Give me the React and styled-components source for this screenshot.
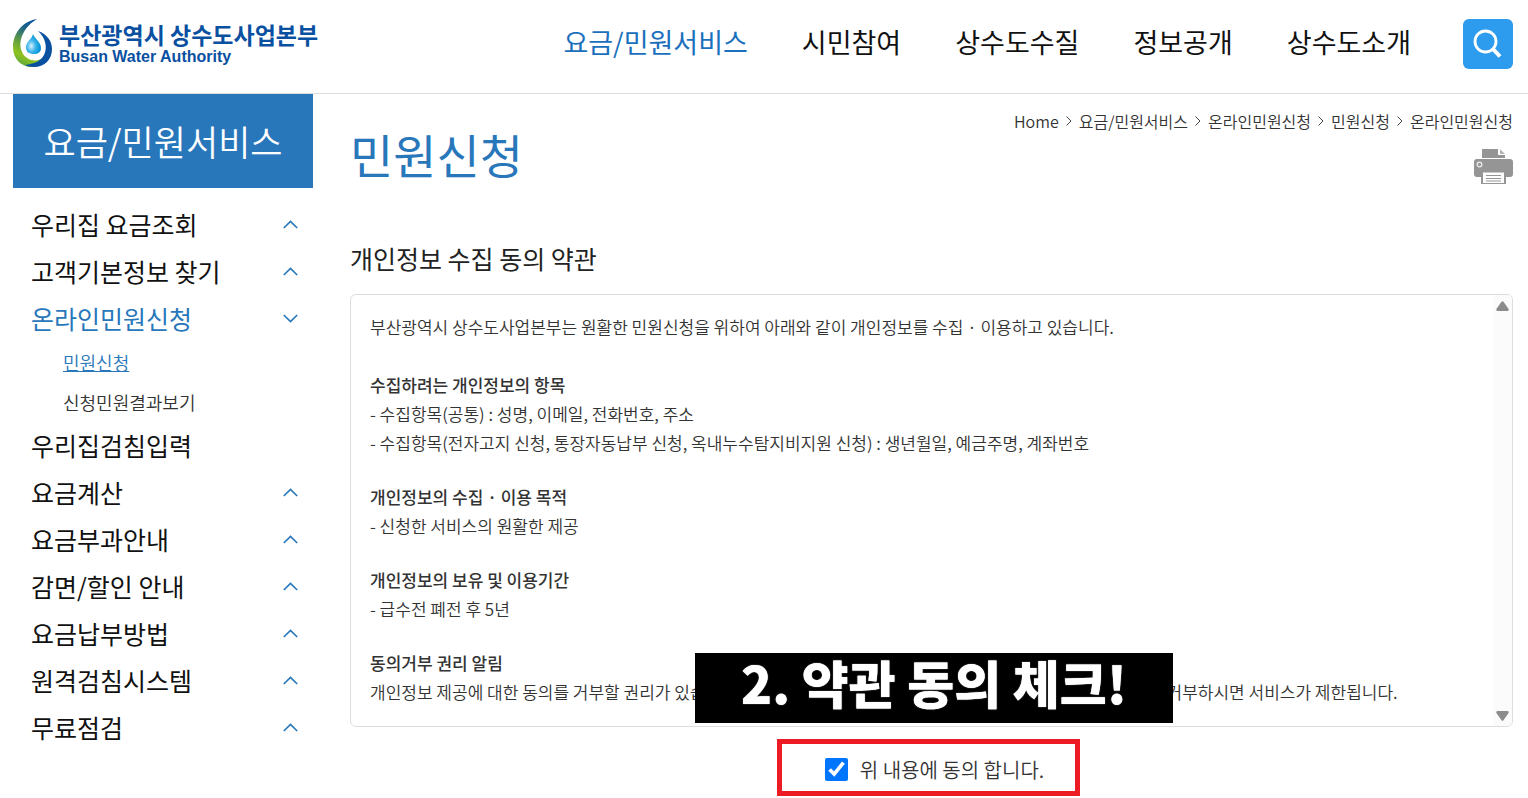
import React from 'react';
import styled, { createGlobalStyle } from 'styled-components';

const GlobalStyle = createGlobalStyle`
  * {
    box-sizing: border-box;
  }
  body {
    margin: 0;
    background: #fff;
    color: #333;
    font-family: 'Noto Sans CJK KR', 'Noto Sans', sans-serif;
    font-size: 17px;
    font-weight: 350;
  }
  a {
    color: inherit;
    text-decoration: none;
  }
  h1, h2, h3, p, ul, ol {
    margin: 0;
    padding: 0;
  }
  ul, ol {
    list-style: none;
  }
  button {
    border: 0;
    padding: 0;
    background: none;
    font: inherit;
    color: inherit;
    cursor: pointer;
  }
`;

const Header = styled.header`
  display: flex;
  align-items: center;
  height: 94px;
  padding: 0 15px 6px 13px;
  border-bottom: 1px solid #ddd;
`;

const LogoLink = styled.a`
  display: flex;
  align-items: center;
  gap: 6px;
  color: #0a50a1;
`;

const LogoText = styled.span`
  display: flex;
  flex-direction: column;
  gap: 2px;
  padding-top: 2px;
  white-space: nowrap;
`;

const LogoName = styled.span`
  font-size: 23px;
  font-weight: 700;
  line-height: 22px;
`;

const LogoSub = styled.span`
  font-family: 'Liberation Sans', Arial, sans-serif;
  font-size: 16px;
  font-weight: 700;
  line-height: 20px;
`;

const Nav = styled.nav`
  display: flex;
  gap: 54px;
  margin-left: auto;
  margin-right: 52px;
`;

const NavLink = styled.a`
  padding-bottom: 4px;
  font-size: 27px;
  font-weight: 400;
  line-height: 40px;
  white-space: nowrap;
  color: ${props => (props.$active ? '#1b70bd' : '#111')};
`;

const SearchButton = styled.button`
  display: flex;
  align-items: center;
  justify-content: center;
  width: 50px;
  height: 50px;
  border-radius: 6px;
  background: #2e9cee;
`;

const Page = styled.div`
  display: flex;
  align-items: flex-start;
  gap: 37px;
  padding: 0 15px 0 13px;
`;

const Sidebar = styled.aside`
  flex: 0 0 300px;
`;

const SidebarTitle = styled.h2`
  height: 94px;
  background: #2977bb;
  color: #fff;
  font-size: 35px;
  font-weight: 350;
  line-height: 94px;
  text-align: center;
`;

const Menu = styled.ul`
  padding: 13px 15px 0 18px;
`;

const MenuLink = styled.a`
  display: flex;
  align-items: center;
  justify-content: space-between;
  font-size: 25px;
  font-weight: 400;
  line-height: 47px;
  color: ${props => (props.$active ? '#2977bb' : '#111')};
`;

const SubMenu = styled.ul`
  padding-left: 32px;
`;

const SubLink = styled.a`
  font-size: 18px;
  line-height: 40px;
  color: ${props => (props.$active ? '#2977bb' : '#333')};
  text-decoration: ${props => (props.$active ? 'underline' : 'none')};
`;

const Main = styled.main`
  flex: 1;
  min-width: 0;
`;

const TopRow = styled.div`
  display: flex;
  justify-content: space-between;
  align-items: flex-start;
`;

const PageTitle = styled.h1`
  padding-top: 22px;
  font-size: 47px;
  font-weight: 400;
  line-height: 76px;
  color: #2977bb;
`;

const Tools = styled.div`
  display: flex;
  flex-direction: column;
  align-items: flex-end;
  gap: 16px;
  padding-top: 15px;
`;

const Crumbs = styled.ol`
  display: flex;
  gap: 7px;
  font-size: 16px;
  line-height: 24px;
`;

const Crumb = styled.li`
  display: flex;
  align-items: center;
  gap: 7px;
`;

const SectionTitle = styled.h2`
  padding-top: 46px;
  font-size: 25px;
  font-weight: 400;
  line-height: 40px;
  color: #222;
`;

const TermsWrap = styled.div`
  position: relative;
  margin-top: 16px;
`;

const Terms = styled.div`
  display: flex;
  border: 1px solid #ddd;
  border-radius: 6px;
  overflow: hidden;
`;

const TermsBody = styled.div`
  flex: 1;
  padding: 17px 19px 20px;
  line-height: 29px;
`;

const Intro = styled.p`
  margin-bottom: 29px;
`;

const TermsGroup = styled.section`
  & + & {
    margin-top: 25px;
  }
`;

const TermsHeading = styled.h3`
  font-size: 17px;
  font-weight: 500;
`;

const ScrollTrack = styled.div`
  display: flex;
  flex-direction: column;
  justify-content: space-between;
  align-items: center;
  width: 19px;
  padding: 6px 0 5px;
  background: #fbfbfb;
`;

const ScrollButton = styled.button`
  display: flex;
`;

const Banner = styled.div`
  position: absolute;
  left: 345px;
  bottom: 4px;
  width: 478px;
  height: 70px;
  background: #000;
  color: #fff;
  font-size: 51px;
  font-weight: 900;
  line-height: 58px;
  text-align: center;
  white-space: nowrap;
  text-shadow: 0 0 1px #fff;
`;

const AgreeRow = styled.div`
  display: flex;
  justify-content: center;
  padding: 12px 6px 0 0;
`;

const AgreeLabel = styled.label`
  display: flex;
  align-items: center;
  justify-content: center;
  gap: 12px;
  width: 303px;
  height: 57px;
  padding: 4px 0 0 12px;
  border: 5px solid #ed1c24;
  font-size: 20px;
`;

const Checkbox = styled.input`
  width: 23px;
  height: 23px;
  margin: 0;
  accent-color: #0075ff;
`;

const navItems = ['요금/민원서비스', '시민참여', '상수도수질', '정보공개', '상수도소개'];

const crumbs = ['Home', '요금/민원서비스', '온라인민원신청', '민원신청', '온라인민원신청'];

const menuItems = [
  { label: '우리집 요금조회', arrow: 'up' },
  { label: '고객기본정보 찾기', arrow: 'up' },
  { label: '온라인민원신청', arrow: 'down', children: ['민원신청', '신청민원결과보기'] },
  { label: '우리집검침입력' },
  { label: '요금계산', arrow: 'up' },
  { label: '요금부과안내', arrow: 'up' },
  { label: '감면/할인 안내', arrow: 'up' },
  { label: '요금납부방법', arrow: 'up' },
  { label: '원격검침시스템', arrow: 'up' },
  { label: '무료점검', arrow: 'up' },
];

const terms = [
  {
    title: '수집하려는 개인정보의 항목',
    lines: [
      '- 수집항목(공통) : 성명, 이메일, 전화번호, 주소',
      '- 수집항목(전자고지 신청, 통장자동납부 신청, 옥내누수탐지비지원 신청) : 생년월일, 예금주명, 계좌번호',
    ],
  },
  { title: '개인정보의 수집 · 이용 목적', lines: ['- 신청한 서비스의 원활한 제공'] },
  { title: '개인정보의 보유 및 이용기간', lines: ['- 급수전 폐전 후 5년'] },
  {
    title: '동의거부 권리 알림',
    lines: [
      '개인정보 제공에 대한 동의를 거부할 권리가 있습니다. 그러나 민원신청에 필요한 개인정보의 수집 및 이용에 동의를 거부하시면 서비스가 제한됩니다.',
    ],
  },
];

const LogoMark = () => (
  <svg width="40" height="50" viewBox="0 0 40 50" aria-hidden="true">
    <defs>
      <linearGradient id="ring" x1="0.7" y1="0" x2="0.4" y2="1">
        <stop offset="0" stopColor="#0a50a1" />
        <stop offset="0.25" stopColor="#1d6388" />
        <stop offset="0.6" stopColor="#6ba53a" />
        <stop offset="0.8" stopColor="#8dc21f" />
        <stop offset="1" stopColor="#5fa83c" />
      </linearGradient>
      <radialGradient id="drop" cx="0.35" cy="0.6" r="0.6">
        <stop offset="0" stopColor="#d5f1fc" />
        <stop offset="0.5" stopColor="#3cb4ea" />
        <stop offset="1" stopColor="#0093d8" />
      </radialGradient>
    </defs>
    <path d="M24 0C10 2 0 14 0 28C0 40 8 48 19 48C25 48 29 44 31 38C25 44 13 42 9 33C4 21 12 7 24 0Z" fill="url(#ring)" />
    <path d="M25 12C34 15 39 22 39 30C39 41 31 48 21 48C17 48 14 47 12 46C21 45 28 42 31 36C35 28 32 18 25 12Z" fill="#0a50a1" />
    <path d="M20 15C21 19 28 23 28 29C28 33 25 35 21 35C16 35 13 33 13 28C13 23 19 20 20 15Z" fill="url(#drop)" />
  </svg>
);

const SearchIcon = () => (
  <svg width="30" height="30" viewBox="0 0 30 30" fill="none" stroke="#fff" aria-hidden="true">
    <circle cx="12.500" cy="12.500" r="10.500" strokeWidth="2.800" />
    <path d="M19.500 19.500L27 27.500" strokeWidth="4" />
  </svg>
);

const PrinterIcon = () => (
  <svg width="39" height="36" viewBox="0 0 39 36" aria-hidden="true">
    <path d="M8 0H24V6H31V9H8Z" fill="#959595" />
    <path d="M26 0L31 5H26Z" fill="#b5b5b5" />
    <path d="M3 10H36Q39 10 39 13V25Q39 28 36 28H3Q0 28 0 25V13Q0 10 3 10Z" fill="#959595" />
    <circle cx="5.500" cy="15.500" r="2.300" fill="#959595" stroke="#eee" strokeWidth="1.300" />
    <path d="M7 22H32V35H7Z" fill="#959595" />
    <path d="M9 23.500H30V34H9Z" fill="#fff" />
    <path d="M12 26.500H27M12 29.500H27M12 32H27" stroke="#959595" strokeWidth="1" />
  </svg>
);

const MenuArrow = ({ dir }) => (
  <svg width="15" height="9" viewBox="0 0 15 9" fill="none" stroke="#2977bb" strokeWidth="1.700" aria-hidden="true">
    <path d={dir === 'up' ? 'M0.800 8L7.500 1.500L14.200 8' : 'M0.800 1L7.500 7.500L14.200 1'} />
  </svg>
);

const CrumbArrow = () => (
  <svg width="6" height="10" viewBox="0 0 6 10" fill="none" stroke="#444" aria-hidden="true">
    <path d="M0.500 0.500L5 5L0.500 9.500" />
  </svg>
);

const ScrollArrow = ({ dir }) => (
  <svg width="13" height="10" viewBox="0 0 13 10" fill="#8b8b8b" aria-hidden="true">
    <path
      d={
        dir === 'up'
          ? 'M5.500 0.700Q6.500 -0.400 7.500 0.700L12.600 8Q13 10 11.500 10H1.500Q0 10 0.400 8Z'
          : 'M5.500 9.300Q6.500 10.400 7.500 9.300L12.600 2Q13 0 11.500 0H1.500Q0 0 0.400 2Z'
      }
    />
  </svg>
);

function App() {
  return (
    <>
      <GlobalStyle />
      <Header>
        <LogoLink href="#">
          <LogoMark />
          <LogoText>
            <LogoName>부산광역시 상수도사업본부</LogoName>
            <LogoSub>Busan Water Authority</LogoSub>
          </LogoText>
        </LogoLink>
        <Nav>
          {navItems.map((item, i) => (
            <NavLink key={item} href="#" $active={i === 0}>{item}</NavLink>
          ))}
        </Nav>
        <SearchButton type="button" aria-label="검색">
          <SearchIcon />
        </SearchButton>
      </Header>
      <Page>
        <Sidebar>
          <SidebarTitle>요금/민원서비스</SidebarTitle>
          <Menu>
            {menuItems.map(item => (
              <li key={item.label}>
                <MenuLink href="#" $active={!!item.children}>
                  {item.label}
                  {item.arrow && <MenuArrow dir={item.arrow} />}
                </MenuLink>
                {item.children && (
                  <SubMenu>
                    {item.children.map((child, i) => (
                      <li key={child}>
                        <SubLink href="#" $active={i === 0}>{child}</SubLink>
                      </li>
                    ))}
                  </SubMenu>
                )}
              </li>
            ))}
          </Menu>
        </Sidebar>
        <Main>
          <TopRow>
            <PageTitle>민원신청</PageTitle>
            <Tools>
              <Crumbs>
                {crumbs.map((crumb, i) => (
                  <Crumb key={i}>
                    {i > 0 && <CrumbArrow />}
                    <a href="#">{crumb}</a>
                  </Crumb>
                ))}
              </Crumbs>
              <button type="button" aria-label="인쇄">
                <PrinterIcon />
              </button>
            </Tools>
          </TopRow>
          <SectionTitle>개인정보 수집 동의 약관</SectionTitle>
          <TermsWrap>
            <Terms>
              <TermsBody>
                <Intro>
                  부산광역시 상수도사업본부는 원활한 민원신청을 위하여 아래와 같이 개인정보를 수집 · 이용하고 있습니다.
                </Intro>
                {terms.map(group => (
                  <TermsGroup key={group.title}>
                    <TermsHeading>{group.title}</TermsHeading>
                    {group.lines.map(line => (
                      <p key={line}>{line}</p>
                    ))}
                  </TermsGroup>
                ))}
              </TermsBody>
              <ScrollTrack>
                <ScrollButton type="button" aria-label="위로">
                  <ScrollArrow dir="up" />
                </ScrollButton>
                <ScrollButton type="button" aria-label="아래로">
                  <ScrollArrow dir="down" />
                </ScrollButton>
              </ScrollTrack>
            </Terms>
            <Banner>2. 약관 동의 체크!</Banner>
          </TermsWrap>
          <AgreeRow>
            <AgreeLabel>
              <Checkbox type="checkbox" defaultChecked />
              위 내용에 동의 합니다.
            </AgreeLabel>
          </AgreeRow>
        </Main>
      </Page>
    </>
  );
}

export default App;
